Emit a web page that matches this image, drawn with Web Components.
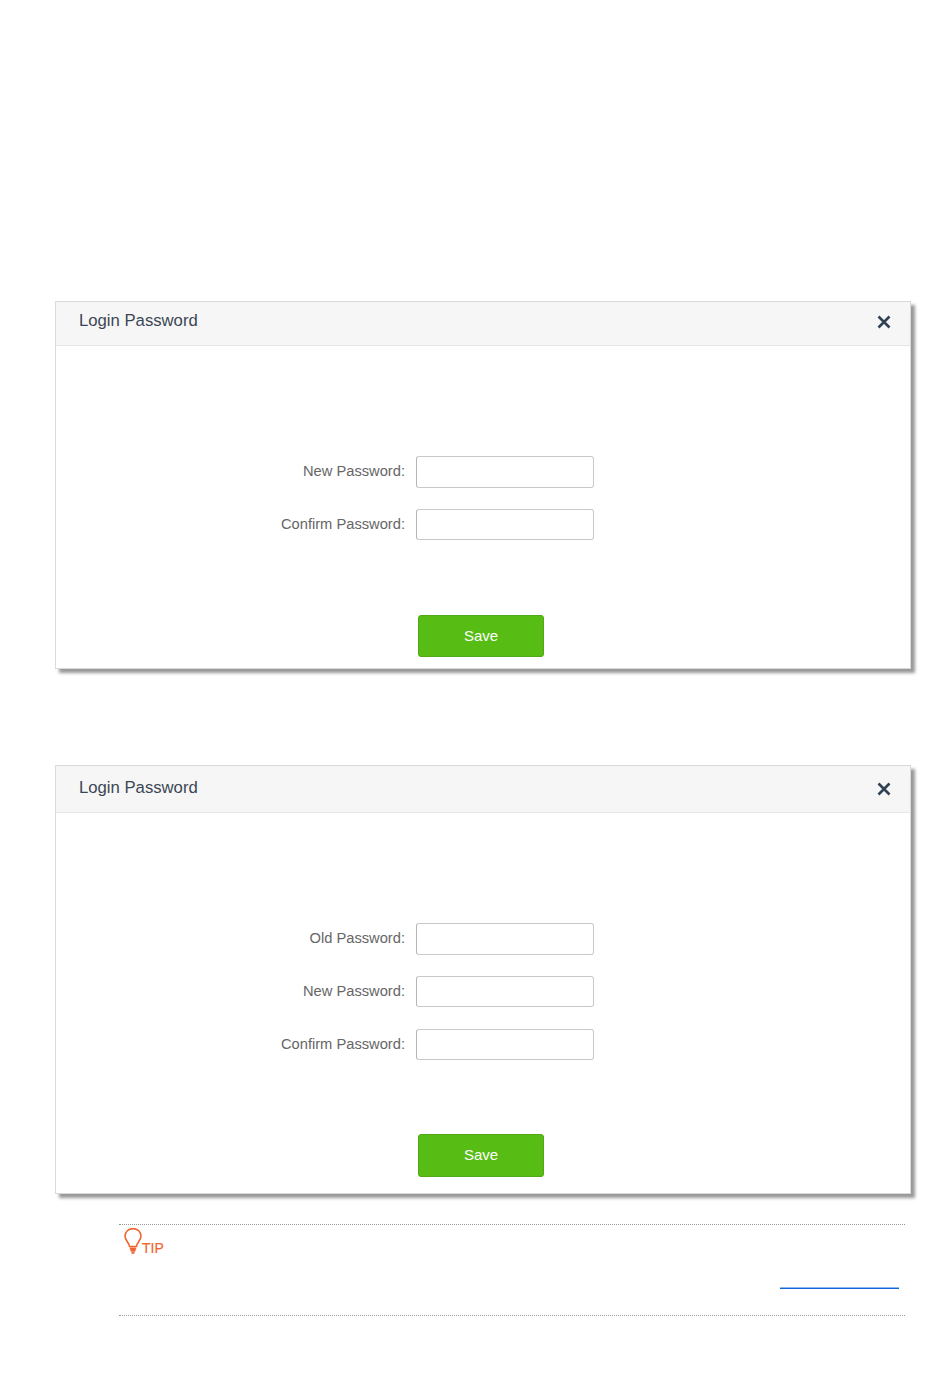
<!DOCTYPE html>
<html>
<head>
<meta charset="utf-8">
<title>Login Password</title>
<style>
  html, body { margin: 0; background: #fff; }
  body { font-family: "Liberation Sans", Arial, sans-serif; }
  main { padding: 301px 0 0 55px; }
  login-dialog + login-dialog { margin-top: 96px; }
</style>
</head>
<body>
<main>
  <login-dialog heading="Login Password" header-height="43" title-top="8" icon-top="13" body-top="110" save-top="75" save-height="42" save-bottom="11">
    <password-row label="New Password:" height="32"></password-row>
    <password-row label="Confirm Password:" height="31" gap="21"></password-row>
  </login-dialog>

  <login-dialog heading="Login Password" header-height="46" title-top="11" icon-top="16" body-top="110" save-top="74" save-height="43" save-bottom="16">
    <password-row label="Old Password:" height="32"></password-row>
    <password-row label="New Password:" height="31" gap="21"></password-row>
    <password-row label="Confirm Password:" height="31" gap="22"></password-row>
  </login-dialog>

  <tip-note></tip-note>
</main>

<script>
// ─── Dialog ───────────────────────────────────────────────────────────────────
class LoginDialog extends HTMLElement {
  constructor() {
    super();
    this.attachShadow({ mode: "open" });
  }

  connectedCallback() {
    const headerHeight = this.getAttribute("header-height");
    const titleTop = this.getAttribute("title-top");
    const iconTop = this.getAttribute("icon-top");
    const bodyTop = this.getAttribute("body-top");
    const saveTop = this.getAttribute("save-top");
    const saveHeight = this.getAttribute("save-height");
    const saveBottom = this.getAttribute("save-bottom");

    this.shadowRoot.innerHTML = `
      <style>
        :host {
          display: block;
          width: 854px;
          background: #fff;
          border: 1px solid #d9d9d9;
          box-shadow: 4px 4px 3px #999;
        }

        header {
          display: flex;
          justify-content: space-between;
          height: ${headerHeight}px;
          padding: 0 19px 0 23px;
          background: #f6f6f6;
          border-bottom: 1px solid #e6e6e6;
        }

        h2 {
          margin: ${titleTop}px 0 0;
          font-size: 16.7px;
          line-height: 21px;
          font-weight: normal;
          color: #3b4654;
        }

        svg { margin-top: ${iconTop}px; }

        .rows {
          padding-top: ${bodyTop}px;
          display: flex;
          flex-direction: column;
        }

        .actions {
          padding: ${saveTop}px 0 ${saveBottom}px 362px;
        }

        button {
          display: block;
          width: 126px;
          height: ${saveHeight}px;
          padding: 0 0 2px;
          background: #57bd15;
          border: 1px solid #4fa814;
          border-radius: 3px;
          color: #fff;
          font: 15px "Liberation Sans", Arial, sans-serif;
        }
      </style>

      <header>
        <h2>${this.getAttribute("heading")}</h2>
        <svg width="14" height="14" viewBox="0 0 14 14" fill="none" stroke="#2f4254" stroke-width="2.6">
          <path d="M1.5 1.5 12.5 12.5M12.5 1.5 1.5 12.5"/>
        </svg>
      </header>
      <div class="rows"><slot></slot></div>
      <div class="actions"><button type="button">Save</button></div>
    `;
  }
}

// ─── Password row ─────────────────────────────────────────────────────────────
class PasswordRow extends HTMLElement {
  constructor() {
    super();
    this.attachShadow({ mode: "open" });
  }

  connectedCallback() {
    const height = this.getAttribute("height");
    const gap = this.getAttribute("gap") || 0;

    this.shadowRoot.innerHTML = `
      <style>
        :host {
          display: flex;
          align-items: flex-start;
          margin-top: ${gap}px;
        }

        label {
          width: 360px;
          padding-right: 11px;
          box-sizing: border-box;
          text-align: right;
          font-size: 14.7px;
          line-height: 17px;
          padding-top: 7px;
          color: #666;
        }

        input {
          width: 178px;
          height: ${height}px;
          margin: 0;
          padding: 0 6px;
          box-sizing: border-box;
          background: #fff;
          border: 1px solid #c9c9c9;
          border-left-color: #b5b5b5;
          border-radius: 3px;
          outline: none;
        }
      </style>

      <label>${this.getAttribute("label")}</label>
      <input type="password">
    `;
  }
}

// ─── Tip ──────────────────────────────────────────────────────────────────────
class TipNote extends HTMLElement {
  constructor() {
    super();
    this.attachShadow({ mode: "open" });
  }

  connectedCallback() {
    this.shadowRoot.innerHTML = `
      <style>
        :host {
          display: block;
          width: 786px;
          height: 90px;
          margin: 30px 0 0 64px;
          border-top: 1px dotted #999;
          border-bottom: 1px dotted #999;
        }

        .title {
          display: flex;
          align-items: flex-end;
          padding: 3px 0 0 5px;
          color: #f0652f;
          font-size: 14px;
          line-height: 16px;
          -webkit-text-stroke: 0.2px #f0652f;
        }

        .title span { margin-bottom: -1px; }

        .link {
          width: 119px;
          height: 2px;
          margin: 32px 0 0 661px;
          background: #1166dd;
          border-top: 1px solid #8db8f0;
          box-sizing: border-box;
        }
      </style>

      <div class="title">
        <svg width="18" height="27" viewBox="0 0 18 27" fill="none" stroke="#f0652f" stroke-width="1.6">
          <path d="M5.5 18.500C5 14 1 12.500 1 8a8 7.400 0 0 1 16 0c0 4.500-4 6-4.500 10.500z"/>
          <path d="M5.800 20.500h6.400M6.500 22.500h5M7.500 24.800h3" stroke-width="2"/>
        </svg>
        <span>TIP</span>
      </div>
      <div class="link"></div>
    `;
  }
}

customElements.define("login-dialog", LoginDialog);
customElements.define("password-row", PasswordRow);
customElements.define("tip-note", TipNote);
</script>
</body>
</html>
